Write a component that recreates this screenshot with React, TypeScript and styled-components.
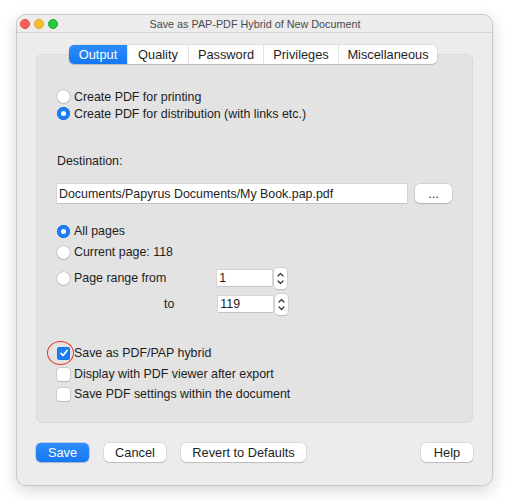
import React from "react";
import styled, { createGlobalStyle } from "styled-components";

const Global = createGlobalStyle`
  html, body { margin: 0; padding: 0; background: #ffffff; }
  body { font-family: "Liberation Sans", Arial, sans-serif; font-size: 12.4px; color: #1e1e1e; }
  * { box-sizing: border-box; }
`;

const Page = styled.div`
  width: 505px;
  height: 500px;
  padding: 14px 0 0 16px;
`;

const Window = styled.div`
  width: 477px;
  height: 472px;
  background: #ececec;
  border-radius: 10px;
  border: 1px solid #c9c9c9;
  box-shadow: 0 5px 16px rgba(0, 0, 0, 0.16);
  display: flex;
  flex-direction: column;
  overflow: hidden;
`;

const TitleBar = styled.div`
  height: 18px;
  flex: 0 0 18px;
  display: flex;
  align-items: center;
  background: #ececec;
  border-bottom: 1px solid #d4d4d4;
`;

const Lights = styled.div`
  display: flex;
  gap: 4px;
  padding-left: 3px;
`;

const Light = styled.span<{ $c: string; $b: string }>`
  width: 10px;
  height: 10px;
  border-radius: 50%;
  background: ${(p) => p.$c};
  border: 0.5px solid ${(p) => p.$b};
`;

const Title = styled.div`
  flex: 1;
  text-align: center;
  font-size: 10.8px;
  color: #4a4a4a;
  margin-right: 40px;
`;

const Body = styled.div`
  display: flex;
  flex-direction: column;
  padding: 12px 19px 0 19px;
`;

const Tabs = styled.div`
  align-self: center;
  display: flex;
  height: 19px;
  background: #fff;
  border-radius: 5px;
  box-shadow: 0 0 0 0.5px rgba(0, 0, 0, 0.12), 0 1px 1px rgba(0, 0, 0, 0.12);
  margin-bottom: -10px;
  position: relative;
  z-index: 1;
  margin-left: -3px;
`;

const Tab = styled.div<{ $active?: boolean; $w: number }>`
  width: ${(p) => p.$w}px;
  display: flex;
  align-items: center;
  justify-content: center;
  font-size: 12.8px;
  color: ${(p) => (p.$active ? "#fff" : "#1e1e1e")};
  background: ${(p) => (p.$active ? "linear-gradient(#2d8cfb, #1677f2)" : "transparent")};
  border-radius: ${(p) => (p.$active ? "5px 0 0 5px" : "0")};
  & + & {
    border-left: 1px solid #e2e2e2;
  }
`;

const Group = styled.div`
  height: 369px;
  background: #e3e3e3;
  border: 1px solid #dadada;
  border-radius: 6px;
  padding: 33px 0 0 20px;
  display: flex;
  flex-direction: column;
`;

const Row = styled.div<{ $h?: number; $mt?: number }>`
  height: ${(p) => p.$h ?? 20}px;
  margin-top: ${(p) => p.$mt ?? 0}px;
  display: flex;
  align-items: center;
  position: relative;
  white-space: nowrap;
`;

const Radio = styled.span<{ $on?: boolean }>`
  width: 13px;
  height: 13px;
  border-radius: 50%;
  flex: 0 0 13px;
  margin-right: 4px;
  background: ${(p) => (p.$on ? "#1b7cf5" : "#fff")};
  box-shadow: ${(p) =>
    p.$on ? "inset 0 0 0 0.5px #1468d8" : "0 0 0 0.5px rgba(0,0,0,0.2), 0 1px 1px rgba(0,0,0,0.1)"};
  display: flex;
  align-items: center;
  justify-content: center;
  &::after {
    content: "";
    display: ${(p) => (p.$on ? "block" : "none")};
    width: 5px;
    height: 5px;
    border-radius: 50%;
    background: #fff;
  }
`;

const Check = styled.span<{ $on?: boolean }>`
  width: 13px;
  height: 13px;
  flex: 0 0 13px;
  border-radius: 3px;
  margin-right: 4px;
  background: ${(p) => (p.$on ? "#1b7cf5" : "#fff")};
  box-shadow: ${(p) =>
    p.$on ? "inset 0 0 0 0.5px #1468d8" : "0 0 0 0.5px rgba(0,0,0,0.2), 0 1px 1px rgba(0,0,0,0.1)"};
  display: flex;
  align-items: center;
  justify-content: center;
`;

const Ring = styled.span`
  position: absolute;
  left: -10px;
  top: -2px;
  width: 27px;
  height: 24px;
  border-radius: 50%;
  border: 1.5px solid #e23b2e;
  pointer-events: none;
`;

const Label = styled.span`
  font-size: 12.4px;
  color: #1e1e1e;
`;

const PathField = styled.div`
  width: 350px;
  height: 19px;
  background: #fff;
  box-shadow: 0 0 0 0.5px rgba(0, 0, 0, 0.12), 0 1px 0 rgba(0, 0, 0, 0.08);
  padding-left: 2px;
  display: flex;
  align-items: center;
  font-size: 12.4px;
`;

const Button = styled.div<{ $w: number; $primary?: boolean }>`
  width: ${(p) => p.$w}px;
  height: 19px;
  border-radius: 5px;
  display: flex;
  align-items: center;
  justify-content: center;
  font-size: 12.8px;
  color: ${(p) => (p.$primary ? "#fff" : "#1e1e1e")};
  background: ${(p) => (p.$primary ? "linear-gradient(#2f8dfb, #1677f2)" : "#fff")};
  box-shadow: ${(p) =>
    p.$primary
      ? "0 0 0 0.5px rgba(0,80,200,0.4), 0 1px 1px rgba(0,0,0,0.12)"
      : "0 0 0 0.5px rgba(0,0,0,0.14), 0 1px 1px rgba(0,0,0,0.14)"};
`;

const Spacer = styled.span<{ $w: number }>`
  width: ${(p) => p.$w}px;
  flex: 0 0 ${(p) => p.$w}px;
`;

const NumField = styled.div`
  width: 55px;
  height: 16px;
  background: #fff;
  box-shadow: 0 0 0 0.5px rgba(0, 0, 0, 0.12), 0 1px 0 rgba(0, 0, 0, 0.08);
  padding-left: 2px;
  display: flex;
  align-items: center;
  font-size: 12.4px;
`;

const Stepper = styled.div`
  width: 13px;
  height: 21px;
  margin-left: 2px;
  background: #fff;
  border-radius: 4px;
  box-shadow: 0 0 0 0.5px rgba(0, 0, 0, 0.15), 0 1px 1px rgba(0, 0, 0, 0.1);
  display: flex;
  align-items: center;
  justify-content: center;
`;

const Footer = styled.div`
  display: flex;
  align-items: center;
  margin-top: 20px;
  gap: 15px;
`;

const Grow = styled.div`
  flex: 1;
`;

const StepperIcon = () => (
  <svg width="9" height="17" viewBox="0 0 9 17">
    <path d="M2 6 L4.5 3.5 L7 6" fill="none" stroke="#333" strokeWidth="1.2" strokeLinecap="round" strokeLinejoin="round" />
    <path d="M2 11 L4.5 13.5 L7 11" fill="none" stroke="#333" strokeWidth="1.2" strokeLinecap="round" strokeLinejoin="round" />
  </svg>
);

const CheckMark = () => (
  <svg width="10" height="10" viewBox="0 0 10 10">
    <path d="M2 5.3 L4.1 7.5 L8 2.5" fill="none" stroke="#fff" strokeWidth="1.7" strokeLinecap="round" strokeLinejoin="round" />
  </svg>
);

export default function App() {
  return (
    <Page>
      <Global />
      <Window>
        <TitleBar>
          <Lights>
            <Light $c="#fe5f57" $b="#e0443e" />
            <Light $c="#febc2e" $b="#dea123" />
            <Light $c="#28c840" $b="#1aab29" />
          </Lights>
          <Title>Save as PAP-PDF Hybrid of New Document</Title>
        </TitleBar>
        <Body>
          <Tabs>
            <Tab $active $w={58}>Output</Tab>
            <Tab $w={61}>Quality</Tab>
            <Tab $w={75}>Password</Tab>
            <Tab $w={75}>Privileges</Tab>
            <Tab $w={99}>Miscellaneous</Tab>
          </Tabs>
          <Group>
            <Row $h={17}>
              <Radio />
              <Label>Create PDF for printing</Label>
            </Row>
            <Row $h={17}>
              <Radio $on />
              <Label>Create PDF for distribution (with links etc.)</Label>
            </Row>
            <Row $h={17} $mt={30}>
              <Label>Destination:</Label>
            </Row>
            <Row $h={19} $mt={15}>
              <PathField>Documents/Papyrus Documents/My Book.pap.pdf</PathField>
              <Spacer $w={8} />
              <Button $w={37}>...</Button>
            </Row>
            <Row $mt={18}>
              <Radio $on />
              <Label>All pages</Label>
            </Row>
            <Row $mt={1}>
              <Radio />
              <Label>Current page: 118</Label>
            </Row>
            <Row $mt={6}>
              <Radio />
              <Label>Page range from</Label>
              <Spacer $w={51} />
              <NumField>1</NumField>
              <Stepper>
                <StepperIcon />
              </Stepper>
            </Row>
            <Row $mt={6}>
              <Spacer $w={107} />
              <Label>to</Label>
              <Spacer $w={44} />
              <NumField>119</NumField>
              <Stepper>
                <StepperIcon />
              </Stepper>
            </Row>
            <Row $mt={29}>
              <Check $on>
                <CheckMark />
              </Check>
              <Label>Save as PDF/PAP hybrid</Label>
              <Ring />
            </Row>
            <Row $mt={1}>
              <Check />
              <Label>Display with PDF viewer after export</Label>
            </Row>
            <Row>
              <Check />
              <Label>Save PDF settings within the document</Label>
            </Row>
          </Group>
          <Footer>
            <Button $w={53} $primary>Save</Button>
            <Button $w={62}>Cancel</Button>
            <Button $w={125}>Revert to Defaults</Button>
            <Grow />
            <Button $w={52}>Help</Button>
          </Footer>
        </Body>
      </Window>
    </Page>
  );
}
